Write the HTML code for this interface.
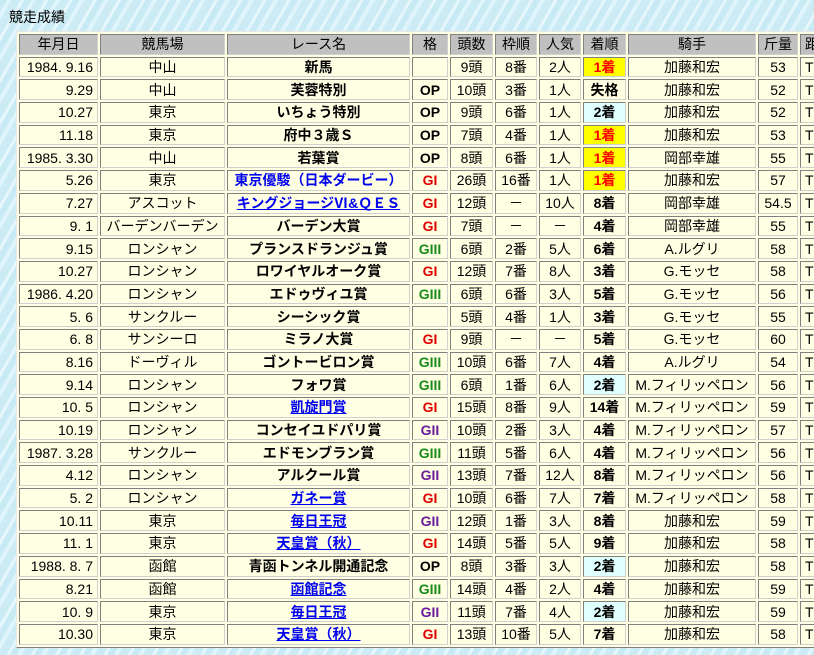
<!DOCTYPE html>
<html><head><meta charset="utf-8"><style>
html,body{margin:0;padding:0;width:814px;height:655px;overflow:hidden}
body{background:#cdeef7;background-image:repeating-linear-gradient(120deg,#c8eaf4 0 6px,#e0f5fb 6px 10px,#cdebf5 10px 18px,#e6f7fc 18px 21px);font-family:"Liberation Sans","Noto Sans CJK JP",sans-serif;font-size:14px;color:#000;position:relative}
h1{position:absolute;left:9px;top:8px;margin:0;font-size:14px;font-weight:normal;line-height:18px}
table{position:absolute;left:16px;top:31px;border-collapse:separate;border-spacing:2px;background:#ffffe4;border:1px solid;border-color:#e8e8e8 #808080 #808080 #e8e8e8;table-layout:fixed;width:847px}
tr{height:20.7px}
td,th{box-sizing:border-box;height:20.7px;padding:0;border:1px solid;border-color:#808080 #d0d0d0 #d0d0d0 #808080;text-align:center;white-space:nowrap;overflow:hidden;line-height:12px;font-weight:normal}
th{background:#c0c0c0}
td.d{text-align:right;padding-right:4px}
.b{font-weight:bold}
.g1,.g2,.g3{font-weight:bold;font-family:"Liberation Sans",sans-serif}
.g1{color:#e00000}.g2{color:#6a1b9a}.g3{color:#1a8a1a}
a{color:#0000ee;text-decoration:underline}
a.n{text-decoration:none}
.w{background:#ffff00;color:#f00;font-weight:bold}
.s{background:#e0ffff;font-weight:bold}
.r{font-weight:bold}
td.l,th.l{text-align:left;padding-left:4px}
</style></head><body>
<h1>競走成績</h1>
<table>
<colgroup><col style="width:79px"><col style="width:125px"><col style="width:183px"><col style="width:36px"><col style="width:43px"><col style="width:42px"><col style="width:42px"><col style="width:43px"><col style="width:128px"><col style="width:40px"><col style="width:60px"></colgroup>
<tr><th>年月日</th><th>競馬場</th><th>レース名</th><th>格</th><th>頭数</th><th>枠順</th><th>人気</th><th>着順</th><th>騎手</th><th>斤量</th><th class="l">距</th></tr>
<tr><td class="d">1984. 9.16</td><td>中山</td><td class="b">新馬</td><td></td><td>9頭</td><td>8番</td><td>2人</td><td class="w">1着</td><td>加藤和宏</td><td>53</td><td class="l">T</td></tr>
<tr><td class="d">9.29</td><td>中山</td><td class="b">芙蓉特別</td><td class="b">OP</td><td>10頭</td><td>3番</td><td>1人</td><td class="r">失格</td><td>加藤和宏</td><td>52</td><td class="l">T</td></tr>
<tr><td class="d">10.27</td><td>東京</td><td class="b">いちょう特別</td><td class="b">OP</td><td>9頭</td><td>6番</td><td>1人</td><td class="s">2着</td><td>加藤和宏</td><td>52</td><td class="l">T</td></tr>
<tr><td class="d">11.18</td><td>東京</td><td class="b">府中３歳Ｓ</td><td class="b">OP</td><td>7頭</td><td>4番</td><td>1人</td><td class="w">1着</td><td>加藤和宏</td><td>53</td><td class="l">T</td></tr>
<tr><td class="d">1985. 3.30</td><td>中山</td><td class="b">若葉賞</td><td class="b">OP</td><td>8頭</td><td>6番</td><td>1人</td><td class="w">1着</td><td>岡部幸雄</td><td>55</td><td class="l">T</td></tr>
<tr><td class="d">5.26</td><td>東京</td><td class="b"><a class="n">東京優駿（日本ダービー）</a></td><td class="g1">GI</td><td>26頭</td><td>16番</td><td>1人</td><td class="w">1着</td><td>加藤和宏</td><td>57</td><td class="l">T</td></tr>
<tr><td class="d">7.27</td><td>アスコット</td><td class="b"><a>キングジョージⅥ&amp;ＱＥＳ</a></td><td class="g1">GI</td><td>12頭</td><td>－</td><td>10人</td><td class="r">8着</td><td>岡部幸雄</td><td>54.5</td><td class="l">T</td></tr>
<tr><td class="d">9. 1</td><td>バーデンバーデン</td><td class="b">バーデン大賞</td><td class="g1">GI</td><td>7頭</td><td>－</td><td>－</td><td class="r">4着</td><td>岡部幸雄</td><td>55</td><td class="l">T</td></tr>
<tr><td class="d">9.15</td><td>ロンシャン</td><td class="b">プランスドランジュ賞</td><td class="g3">GIII</td><td>6頭</td><td>2番</td><td>5人</td><td class="r">6着</td><td>A.ルグリ</td><td>58</td><td class="l">T</td></tr>
<tr><td class="d">10.27</td><td>ロンシャン</td><td class="b">ロワイヤルオーク賞</td><td class="g1">GI</td><td>12頭</td><td>7番</td><td>8人</td><td class="r">3着</td><td>G.モッセ</td><td>58</td><td class="l">T</td></tr>
<tr><td class="d">1986. 4.20</td><td>ロンシャン</td><td class="b">エドゥヴィユ賞</td><td class="g3">GIII</td><td>6頭</td><td>6番</td><td>3人</td><td class="r">5着</td><td>G.モッセ</td><td>56</td><td class="l">T</td></tr>
<tr><td class="d">5. 6</td><td>サンクルー</td><td class="b">シーシック賞</td><td></td><td>5頭</td><td>4番</td><td>1人</td><td class="r">3着</td><td>G.モッセ</td><td>55</td><td class="l">T</td></tr>
<tr><td class="d">6. 8</td><td>サンシーロ</td><td class="b">ミラノ大賞</td><td class="g1">GI</td><td>9頭</td><td>－</td><td>－</td><td class="r">5着</td><td>G.モッセ</td><td>60</td><td class="l">T</td></tr>
<tr><td class="d">8.16</td><td>ドーヴィル</td><td class="b">ゴントービロン賞</td><td class="g3">GIII</td><td>10頭</td><td>6番</td><td>7人</td><td class="r">4着</td><td>A.ルグリ</td><td>54</td><td class="l">T</td></tr>
<tr><td class="d">9.14</td><td>ロンシャン</td><td class="b">フォワ賞</td><td class="g3">GIII</td><td>6頭</td><td>1番</td><td>6人</td><td class="s">2着</td><td>M.フィリッペロン</td><td>56</td><td class="l">T</td></tr>
<tr><td class="d">10. 5</td><td>ロンシャン</td><td class="b"><a>凱旋門賞</a></td><td class="g1">GI</td><td>15頭</td><td>8番</td><td>9人</td><td class="r">14着</td><td>M.フィリッペロン</td><td>59</td><td class="l">T</td></tr>
<tr><td class="d">10.19</td><td>ロンシャン</td><td class="b">コンセイユドパリ賞</td><td class="g2">GII</td><td>10頭</td><td>2番</td><td>3人</td><td class="r">4着</td><td>M.フィリッペロン</td><td>57</td><td class="l">T</td></tr>
<tr><td class="d">1987. 3.28</td><td>サンクルー</td><td class="b">エドモンブラン賞</td><td class="g3">GIII</td><td>11頭</td><td>5番</td><td>6人</td><td class="r">4着</td><td>M.フィリッペロン</td><td>56</td><td class="l">T</td></tr>
<tr><td class="d">4.12</td><td>ロンシャン</td><td class="b">アルクール賞</td><td class="g2">GII</td><td>13頭</td><td>7番</td><td>12人</td><td class="r">8着</td><td>M.フィリッペロン</td><td>56</td><td class="l">T</td></tr>
<tr><td class="d">5. 2</td><td>ロンシャン</td><td class="b"><a>ガネー賞</a></td><td class="g1">GI</td><td>10頭</td><td>6番</td><td>7人</td><td class="r">7着</td><td>M.フィリッペロン</td><td>58</td><td class="l">T</td></tr>
<tr><td class="d">10.11</td><td>東京</td><td class="b"><a>毎日王冠</a></td><td class="g2">GII</td><td>12頭</td><td>1番</td><td>3人</td><td class="r">8着</td><td>加藤和宏</td><td>59</td><td class="l">T</td></tr>
<tr><td class="d">11. 1</td><td>東京</td><td class="b"><a>天皇賞（秋）</a></td><td class="g1">GI</td><td>14頭</td><td>5番</td><td>5人</td><td class="r">9着</td><td>加藤和宏</td><td>58</td><td class="l">T</td></tr>
<tr><td class="d">1988. 8. 7</td><td>函館</td><td class="b">青函トンネル開通記念</td><td class="b">OP</td><td>8頭</td><td>3番</td><td>3人</td><td class="s">2着</td><td>加藤和宏</td><td>58</td><td class="l">T</td></tr>
<tr><td class="d">8.21</td><td>函館</td><td class="b"><a>函館記念</a></td><td class="g3">GIII</td><td>14頭</td><td>4番</td><td>2人</td><td class="r">4着</td><td>加藤和宏</td><td>59</td><td class="l">T</td></tr>
<tr><td class="d">10. 9</td><td>東京</td><td class="b"><a>毎日王冠</a></td><td class="g2">GII</td><td>11頭</td><td>7番</td><td>4人</td><td class="s">2着</td><td>加藤和宏</td><td>59</td><td class="l">T</td></tr>
<tr><td class="d">10.30</td><td>東京</td><td class="b"><a>天皇賞（秋）</a></td><td class="g1">GI</td><td>13頭</td><td>10番</td><td>5人</td><td class="r">7着</td><td>加藤和宏</td><td>58</td><td class="l">T</td></tr>
</table>
</body></html>
